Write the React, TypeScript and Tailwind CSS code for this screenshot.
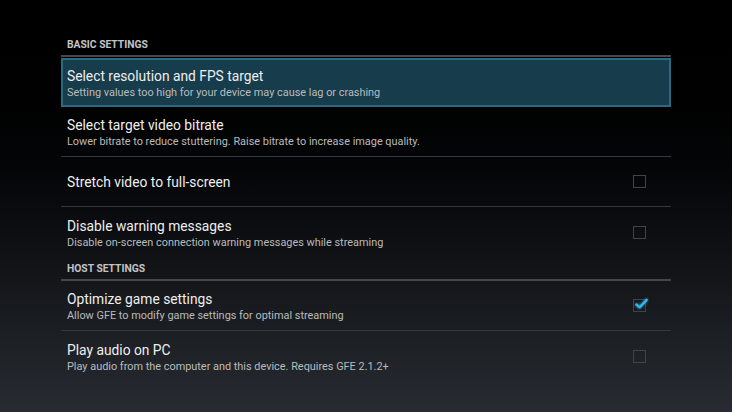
import React from "react";

type Pref = {
  title: string;
  summary?: string;
  checkbox?: boolean;
  checked?: boolean;
  selected?: boolean;
  last?: boolean;
};

const basic: Pref[] = [
  {
    title: "Select resolution and FPS target",
    summary: "Setting values too high for your device may cause lag or crashing",
    selected: true,
  },
  {
    title: "Select target video bitrate",
    summary: "Lower bitrate to reduce stuttering. Raise bitrate to increase image quality.",
  },
  { title: "Stretch video to full-screen", checkbox: true },
  {
    title: "Disable warning messages",
    summary: "Disable on-screen connection warning messages while streaming",
    checkbox: true,
    last: true,
  },
];

const host: Pref[] = [
  {
    title: "Optimize game settings",
    summary: "Allow GFE to modify game settings for optimal streaming",
    checkbox: true,
    checked: true,
  },
  {
    title: "Play audio on PC",
    summary: "Play audio from the computer and this device. Requires GFE 2.1.2+",
    checkbox: true,
    last: true,
  },
];

const CheckBox = ({ checked }: { checked?: boolean }) => (
  <div className="relative w-[13px] h-[13px] border-[1.5px] border-[#404347] mr-[25px] shrink-0">
    {checked && (
      <svg
        className="absolute left-[0px] top-[-3px] w-[15px] h-[15px]"
        viewBox="0 0 16 16"
        fill="none"
      >
        <path
          d="M2.5 8 L6 11 L13.5 3"
          stroke="#33b5e5"
          strokeWidth="2.6"
          strokeLinecap="round"
          strokeLinejoin="round"
          style={{ filter: "drop-shadow(0 0 1.5px rgba(51,181,229,0.8))" }}
        />
      </svg>
    )}
  </div>
);

const Header = ({ label }: { label: string }) => (
  <div className="flex items-end h-[23px] pb-[4px] px-[6px] border-b-2 border-[#44474b]">
    <p className="text-[10.3px] leading-[12px] font-bold text-[#c2c4c6]">{label}</p>
  </div>
);

const Row = ({ p }: { p: Pref }) => (
  <div
    className={`flex items-center h-[50px] ${
      p.last ? "" : "border-b border-[#34373b]"
    }`}
  >
    <div
      className={`flex items-center w-full h-full ${
        p.selected ? "bg-[#173c4c] border-2 border-[#2b6a80] mt-[1px]" : ""
      }`}
    >
      <div
        className={`flex flex-col flex-1 pt-[2px] ${p.selected ? "pl-[4px]" : "pl-[6px]"}`}
      >
        <p className="text-[13.8px] leading-[19px] text-[#eeeeee]">{p.title}</p>
        {p.summary && (
          <p className="text-[10.9px] leading-[14px] text-[#b9bbbd]">{p.summary}</p>
        )}
      </div>
      {p.checkbox && <CheckBox checked={p.checked} />}
    </div>
  </div>
);

export default function App() {
  return (
    <div
      className="w-[732px] h-[412px] overflow-hidden bg-gradient-to-b from-[#000000] to-[#282c32]"
      style={{ fontFamily: "Roboto, 'Noto Sans', sans-serif" }}
    >
      <div className="w-[610px] mx-auto pt-[34px]">
        <Header label="BASIC SETTINGS" />
        {basic.map((p) => (
          <Row key={p.title} p={p} />
        ))}
        <div className="h-[1px]" />
        <Header label="HOST SETTINGS" />
        {host.map((p) => (
          <Row key={p.title} p={p} />
        ))}
      </div>
    </div>
  );
}
